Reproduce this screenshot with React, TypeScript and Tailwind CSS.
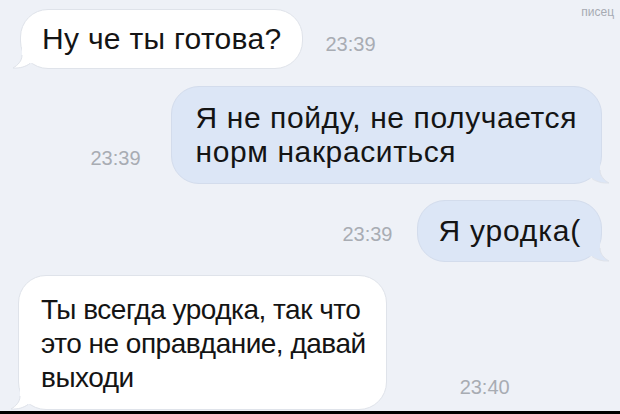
import type { ReactNode } from "react"

const font = "font-['Liberation_Sans',Arial,sans-serif]"

function Tail({ side, fill }: { side: "left" | "right"; fill: string }) {
  return (
    <svg
      width="24"
      height="22"
      viewBox="0 0 24 22"
      className={
        side === "left"
          ? "absolute -left-[9px] -bottom-[1px]"
          : "absolute -right-[9px] -bottom-[1px] -scale-x-100"
      }
    >
      <path d="M10 0 L10 8 C10 14 6 18 1 21 C8 21.5 14 19.5 18 16 L24 16 L24 0 Z" fill={fill} />
      <path d="M10 8 C10 14 6 18 1 21 C8 21.5 14 19.5 18 16.5" fill="none" stroke="#dfe3ea" strokeWidth="1" />
    </svg>
  )
}

function Bubble({ out, children, className }: { out?: boolean; children: ReactNode; className?: string }) {
  return (
    <div
      className={`relative rounded-[28px] border leading-[34px] text-[#141414] ${
        out ? "bg-[#dce6f6] border-[#d3dcec]" : "bg-white border-[#dfe3ea]"
      } ${className ?? ""}`}
    >
      {children}
      <Tail side={out ? "right" : "left"} fill={out ? "#dce6f6" : "#ffffff"} />
    </div>
  )
}

function Time({ children, className }: { children: ReactNode; className?: string }) {
  return <span className={`text-[20px] leading-none text-[#a8acb3] ${className ?? ""}`}>{children}</span>
}

export default function App() {
  return (
    <div className={`relative flex h-[414px] w-[620px] flex-col overflow-hidden bg-[#eef1f7] ${font}`}>
      <span className="absolute right-[6px] top-[3px] text-[12px] text-[#a7abb3]">писец</span>

      <div className="flex flex-1 flex-col overflow-hidden">
        <div className="flex items-center pl-[20px] pt-[9px]">
          <Bubble className="px-[21px] py-[12px] text-[30px] tracking-[0.3px]">Ну че ты готова?</Bubble>
          <Time className="ml-[22px] mt-[10px]">23:39</Time>
        </div>

        <div className="flex items-end justify-end pr-[18px] pt-[17px]">
          <Time className="mb-[16px] mr-[30px]">23:39</Time>
          <Bubble out className="px-[24px] py-[14px] text-[30px] tracking-[0.6px]">
            Я не пойду, не получается
            <br />
            норм накраситься
          </Bubble>
        </div>

        <div className="flex items-center justify-end pr-[18px] pt-[16px]">
          <Time className="mr-[25px] mt-[6px]">23:39</Time>
          <Bubble out className="px-[20px] py-[13px] text-[30px] tracking-[0.8px]">Я уродка(</Bubble>
        </div>

        <div className="flex items-end pl-[18px] pt-[13px]">
          <Bubble className="pl-[22px] pr-[20px] pb-[14px] pt-[17px] text-[28px] tracking-[-0.5px]">
            Ты всегда уродка, так что
            <br />
            это не оправдание, давай
            <br />
            выходи
          </Bubble>
          <Time className="mb-[13px] ml-[73px]">23:40</Time>
        </div>
      </div>

      <div className="h-[3px] shrink-0 bg-black" />
    </div>
  )
}
